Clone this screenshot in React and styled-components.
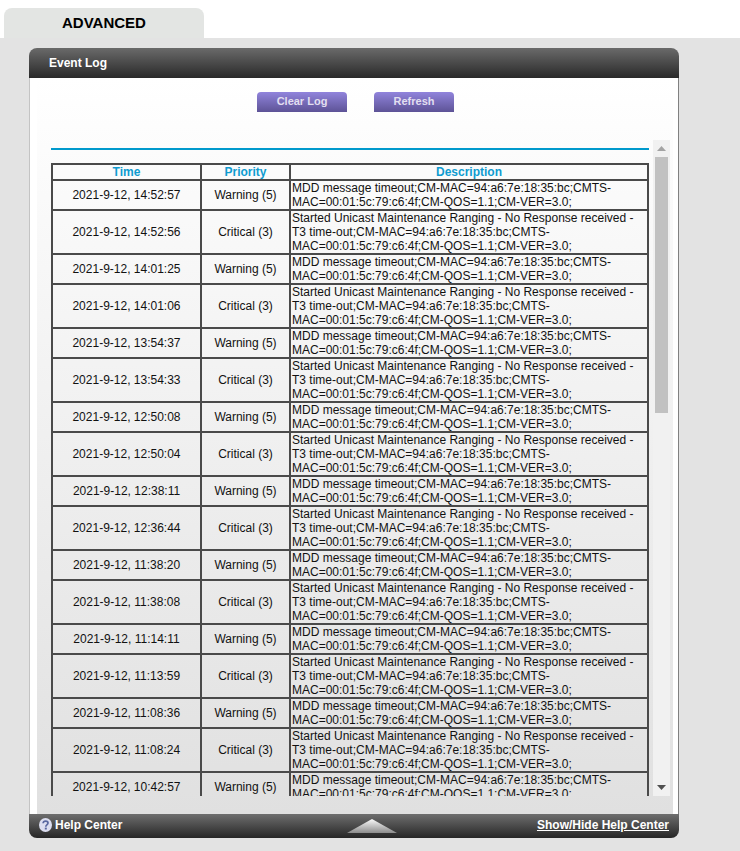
import React from "react";
import styled, { createGlobalStyle } from "styled-components";

const Global = createGlobalStyle`
  html, body { margin: 0; padding: 0; background: #fff; }
  body { font-family: "Liberation Sans", Arial, sans-serif; }
  #root { width: 740px; height: 851px; overflow: hidden; }
`;

const Page = styled.div`
  width: 740px;
  height: 851px;
  display: flex;
  flex-direction: column;
`;
const TabBar = styled.div`
  height: 38px;
  padding: 8px 0 0 4px;
  box-sizing: border-box;
  flex: none;
`;
const Tab = styled.div`
  width: 200px;
  height: 30px;
  background: #e3e5e3;
  border-radius: 8px 8px 0 0;
  box-sizing: border-box;
  padding: 6px 0 0 58px;
  font-size: 15px;
  line-height: 18px;
  font-weight: 700;
  color: #000;
`;
const Stage = styled.div`
  flex: 1;
  background: #e3e3e3;
  padding: 10px 0 0 29px;
`;
const Panel = styled.section`
  width: 650px;
  height: 790px;
  display: flex;
  flex-direction: column;
`;
const PanelHead = styled.header`
  height: 30px;
  flex: none;
  border-radius: 8px 8px 0 0;
  background: linear-gradient(#6a6a6a, #292929);
  color: #fff;
  font-size: 12px;
  font-weight: 700;
  line-height: 30px;
  padding-left: 20px;
`;
const PanelBody = styled.div`
  flex: 1;
  min-height: 0;
  display: flex;
  background: #fff;
  border-left: 1px solid #c4c4c4;
  border-right: 1px solid #808080;
  padding: 0 5px 0 7px;
`;
const PanelInner = styled.div`
  flex: 1;
  min-width: 0;
  background: linear-gradient(#ffffff, #e0e0e0);
  display: flex;
  flex-direction: column;
  padding-left: 14px;
`;
const Actions = styled.div`
  display: flex;
  gap: 27px;
  padding: 14px 0 0 206px;
  box-sizing: border-box;
  flex: none;
  height: 62px;
`;
const Button = styled.button`
  width: ${(p) => p.$w}px;
  height: 20px;
  padding: 0 0 2px;
  border: 0;
  border-radius: 4px 4px 0 0;
  background: linear-gradient(#9184dc, #5d5396);
  color: #e2dff0;
  font: 700 11px/18px "Liberation Sans", Arial, sans-serif;
`;
const ScrollRow = styled.div`
  display: flex;
  height: 656px;
  flex: none;
`;
const ScrollContent = styled.div`
  width: 602px;
  overflow: hidden;
  padding-top: 8px;
  box-sizing: border-box;
`;
const Rule = styled.div`
  width: 598px;
  height: 2px;
  background: #0099cc;
  margin-bottom: 13px;
`;
const Table = styled.table`
  width: 598px;
  table-layout: fixed;
  border-collapse: separate;
  border-spacing: 0;
  border-top: 2px solid #4a4a4a;
  border-left: 2px solid #4a4a4a;
  font-size: 12px;
  line-height: 14px;
  color: #111;
`;
const HeadCell = styled.th`
  border-right: 2px solid #4a4a4a;
  border-bottom: 2px solid #4a4a4a;
  padding: 0;
  height: 14px;
  color: #0f9bd0;
  font-weight: 700;
  text-align: center;
`;
const Cell = styled.td`
  border-right: 2px solid #4a4a4a;
  border-bottom: 2px solid #4a4a4a;
  padding: 0;
  text-align: center;
`;
const DescCell = styled.td`
  border-right: 2px solid #4a4a4a;
  border-bottom: 2px solid #4a4a4a;
  padding: 0 0 0 1px;
  text-align: left;
`;
const Scrollbar = styled.div`
  width: 17px;
  background: #f1f1f1;
  display: flex;
  flex-direction: column;
  align-items: center;
`;
const Arrow = styled.div`
  height: 17px;
  flex: none;
  display: flex;
  align-items: center;
  justify-content: center;
`;
const Thumb = styled.div`
  width: 13px;
  height: 256px;
  background: #c1c1c1;
  flex: none;
`;
const TrackFill = styled.div`
  flex: 1;
`;
const PanelFoot = styled.footer`
  height: 24px;
  flex: none;
  box-sizing: border-box;
  border-radius: 0 0 8px 8px;
  background: linear-gradient(#6e6e6e, #4a4a4a 50%, #262626);
  color: #fff;
  font-size: 12px;
  font-weight: 700;
  display: grid;
  grid-template-columns: 308px 50px 1fr;
  align-items: center;
  padding: 0 10px 2px 10px;
`;
const HelpLabel = styled.div`
  display: flex;
  align-items: center;
  gap: 3px;
`;
const Grip = styled.div`
  display: flex;
  margin-top: 2px;
`;
const ToggleLink = styled.a`
  justify-self: end;
  color: #fff;
  text-decoration: underline;
`;

const MDD = "MDD message timeout;CM-MAC=94:a6:7e:18:35:bc;CMTS-MAC=00:01:5c:79:c6:4f;CM-QOS=1.1;CM-VER=3.0;";
const T3 = "Started Unicast Maintenance Ranging - No Response received - T3 time-out;CM-MAC=94:a6:7e:18:35:bc;CMTS-MAC=00:01:5c:79:c6:4f;CM-QOS=1.1;CM-VER=3.0;";

const times = [
  "14:52:57", "14:52:56", "14:01:25", "14:01:06", "13:54:37", "13:54:33",
  "12:50:08", "12:50:04", "12:38:11", "12:36:44", "11:38:20", "11:38:08",
  "11:14:11", "11:13:59", "11:08:36", "11:08:24", "10:42:57",
];

const HelpIcon = () => (
  <svg width="13" height="14" viewBox="0 0 13 14">
    <ellipse cx="6.5" cy="7" rx="6.5" ry="7" fill="#dcdef0" />
    <path d="M4.1 5.3C4.2 3.9 5.2 3.1 6.6 3.1c1.4 0 2.4.8 2.4 2 0 1.9-2.2 1.8-2.2 3.6" fill="none" stroke="#5a68a0" strokeWidth="1.7" />
    <rect x="5.8" y="9.6" width="2" height="1.9" fill="#5a68a0" />
  </svg>
);

export default function App() {
  return (
    <Page>
      <Global />
      <TabBar>
        <Tab>ADVANCED</Tab>
      </TabBar>
      <Stage>
        <Panel>
          <PanelHead>Event Log</PanelHead>
          <PanelBody>
            <PanelInner>
              <Actions>
                <Button $w={90}>Clear Log</Button>
                <Button $w={80}>Refresh</Button>
              </Actions>
              <ScrollRow>
                <ScrollContent>
                  <Rule />
                  <Table>
                    <colgroup>
                      <col style={{ width: 149 }} />
                      <col style={{ width: 89 }} />
                      <col />
                    </colgroup>
                    <thead>
                      <tr>
                        <HeadCell>Time</HeadCell>
                        <HeadCell>Priority</HeadCell>
                        <HeadCell>Description</HeadCell>
                      </tr>
                    </thead>
                    <tbody>
                      {times.map((t, i) => (
                        <tr key={t}>
                          <Cell>2021-9-12, {t}</Cell>
                          <Cell>{i % 2 === 0 ? "Warning (5)" : "Critical (3)"}</Cell>
                          <DescCell>{i % 2 === 0 ? MDD : T3}</DescCell>
                        </tr>
                      ))}
                    </tbody>
                  </Table>
                </ScrollContent>
                <Scrollbar>
                  <Arrow>
                    <svg width="9" height="5" viewBox="0 0 9 5"><path d="M4.5 0L9 5H0z" fill="#a3a3a3" /></svg>
                  </Arrow>
                  <Thumb />
                  <TrackFill />
                  <Arrow>
                    <svg width="9" height="5" viewBox="0 0 9 5"><path d="M0 0H9L4.5 5z" fill="#505050" /></svg>
                  </Arrow>
                </Scrollbar>
              </ScrollRow>
            </PanelInner>
          </PanelBody>
          <PanelFoot>
            <HelpLabel>
              <HelpIcon />
              Help Center
            </HelpLabel>
            <Grip>
              <svg width="50" height="14" viewBox="0 0 50 14">
                <defs>
                  <linearGradient id="g" x1="0" y1="0" x2="0" y2="1">
                    <stop offset="0" stopColor="#fafafa" />
                    <stop offset="1" stopColor="#8c8c8c" />
                  </linearGradient>
                </defs>
                <path d="M25 0L50 14H0z" fill="url(#g)" />
              </svg>
            </Grip>
            <ToggleLink>Show/Hide Help Center</ToggleLink>
          </PanelFoot>
        </Panel>
      </Stage>
    </Page>
  );
}
